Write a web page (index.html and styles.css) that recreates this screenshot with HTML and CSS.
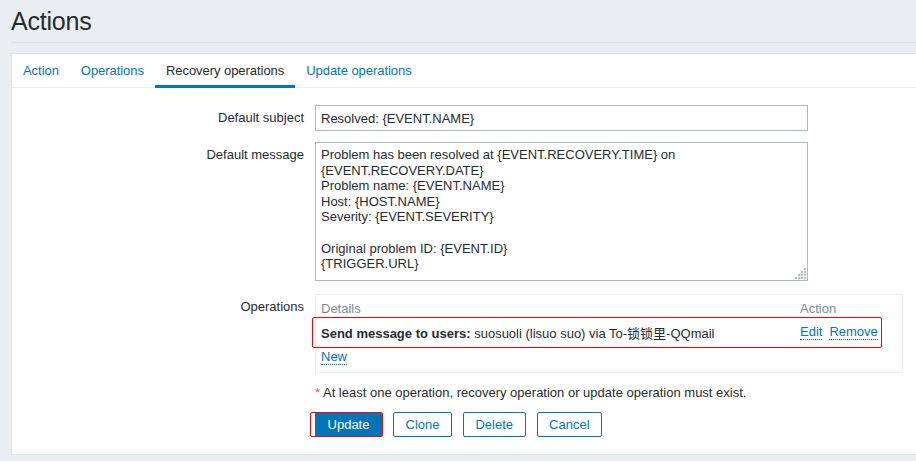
FILE: index.html
```html
<!DOCTYPE html>
<html lang="en">
<head>
<meta charset="utf-8">
<title>Actions</title>
<link rel="stylesheet" href="styles.css">
</head>
<body>
<header class="page-header">
  <h1 class="page-title">Actions</h1>
</header>
<main class="panel">
  <nav class="tabs">
    <a class="tab" href="#">Action</a>
    <a class="tab" href="#">Operations</a>
    <a class="tab tab-active" href="#">Recovery operations</a>
    <a class="tab" href="#">Update operations</a>
  </nav>
  <form class="form">
    <div class="form-row">
      <label class="form-label">Default subject</label>
      <div class="form-field">
        <input class="text-input" type="text" value="Resolved: {EVENT.NAME}">
      </div>
    </div>
    <div class="form-row form-row-wide">
      <label class="form-label">Default message</label>
      <div class="form-field">
        <textarea class="text-area">Problem has been resolved at {EVENT.RECOVERY.TIME} on {EVENT.RECOVERY.DATE}
Problem name: {EVENT.NAME}
Host: {HOST.NAME}
Severity: {EVENT.SEVERITY}

Original problem ID: {EVENT.ID}
{TRIGGER.URL}</textarea>
      </div>
    </div>
    <div class="form-row">
      <label class="form-label">Operations</label>
      <div class="form-field">
        <div class="ops-block">
          <div class="ops-table">
            <div class="ops-head">Details</div>
            <div class="ops-head">Action</div>
            <div class="ops-row">
              <div class="ops-cell"><b>Send message to users:</b> suosuoli (lisuo suo) via To-锁锁里-QQmail</div>
              <div class="ops-cell ops-actions"><a class="link" href="#">Edit</a><a class="link" href="#">Remove</a></div>
            </div>
          </div>
          <div class="ops-new"><a class="link" href="#">New</a></div>
        </div>
      </div>
    </div>
    <div class="form-row">
      <div class="form-label"></div>
      <div class="form-field note"><span class="asterisk">*</span> At least one operation, recovery operation or update operation must exist.</div>
    </div>
    <div class="form-row form-row-buttons">
      <div class="form-label"></div>
      <div class="form-field buttons">
        <button class="btn btn-primary" type="button">Update</button>
        <button class="btn" type="button">Clone</button>
        <button class="btn" type="button">Delete</button>
        <button class="btn" type="button">Cancel</button>
      </div>
    </div>
  </form>
</main>
</body>
</html>
```

FILE: styles.css
```css
* { box-sizing: border-box; }

html, body {
  margin: 0;
  padding: 0;
  height: 100%;
}

body {
  background: #ebeef0;
  color: #1f2c33;
  font-family: "Liberation Sans", Arial, "Noto Sans CJK SC", sans-serif;
  font-size: 13px;
  overflow: hidden;
}

.page-header {
  margin-left: 11px;
  height: 43px;
  border-bottom: 1px solid #dde2e5;
}

.page-title {
  margin: 0;
  padding-top: 6px;
  font-size: 25px;
  font-weight: normal;
  line-height: 30px;
  color: #1f2c33;
  letter-spacing: -0.2px;
}

.panel {
  margin: 10px -20px 0 11px;
  background: #ffffff;
  border: 1px solid #dfe4e7;
  height: 402px;
}

.tabs {
  display: flex;
  height: 34px;
  border-bottom: 1px solid #ebeef0;
}

.tab {
  display: block;
  padding: 0 11px;
  line-height: 33px;
  color: #0275b8;
  text-decoration: none;
  letter-spacing: -0.05px;
}

.tab-active {
  color: #1f2c33;
  border-bottom: 3px solid #0275b8;
  height: 34px;
}

.form {
  padding-top: 17px;
}

.form-row {
  display: grid;
  grid-template-columns: 292px 1fr;
  column-gap: 11px;
  margin-bottom: 11px;
}

.form-row-wide {
  margin-bottom: 13px;
}

.form-label {
  text-align: right;
  line-height: 16px;
  padding-top: 5px;
}

.text-input {
  display: block;
  width: 493px;
  height: 26px;
  border: 1px solid #acbbc2;
  border-radius: 0;
  padding: 0 5px;
  font: inherit;
  color: #1f2c33;
  background: #fff;
}

.text-area {
  display: block;
  width: 493px;
  height: 139px;
  border: 1px solid #acbbc2;
  border-radius: 0;
  padding: 4px 5px;
  font: inherit;
  line-height: 15.6px;
  color: #1f2c33;
  background: #fff;
  resize: vertical;
}

.text-area::-webkit-resizer {
  background:
    linear-gradient(135deg, #fff 52%, transparent 52%),
    radial-gradient(circle at 1px 1px, #b3bec4 0.9px, transparent 1.1px) 0 0 / 3px 3px;
}

.ops-block {
  width: 588px;
  border: 1px solid #ebeef0;
  padding: 5px 5px 6px;
}

.ops-table {
  display: grid;
  grid-template-columns: 1fr 97px;
}

.ops-head {
  color: #768d99;
  line-height: 18px;
}

.ops-row {
  grid-column: 1 / -1;
  display: grid;
  grid-template-columns: 1fr 97px;
  height: 31px;
  align-items: center;
  position: relative;
  top: -1px;
  margin-bottom: -1px;
}

.ops-row::after {
  content: "";
  position: absolute;
  left: -9px;
  right: 15px;
  top: 0;
  bottom: 0;
  border: 1.5px solid #f00;
  border-radius: 2px;
  pointer-events: none;
}

.ops-actions {
  display: flex;
  gap: 7px;
}

.link {
  color: #0275b8;
  text-decoration: none;
  border-bottom: 1px dotted #0275b8;
  line-height: 14px;
}

.ops-new {
  line-height: 18px;
}

.note {
  padding-top: 1px;
  line-height: 16px;
}

.asterisk {
  color: #e45959;
}

.form-row-buttons {
  margin-top: 2px;
}

.buttons {
  display: flex;
  gap: 11px;
}

.btn {
  height: 25px;
  padding: 0 11.5px;
  border: 1px solid #0275b8;
  border-radius: 2px;
  background: #fff;
  color: #0275b8;
  font: inherit;
  line-height: 23px;
  cursor: pointer;
}

.btn-primary {
  background: #0275b8;
  color: #fff;
  width: 67px;
  position: relative;
}

.btn-primary::after {
  content: "";
  position: absolute;
  left: -6px;
  right: -2px;
  top: -1px;
  bottom: -1px;
  border: 1.5px solid #f00;
  border-radius: 2px;
}
```
